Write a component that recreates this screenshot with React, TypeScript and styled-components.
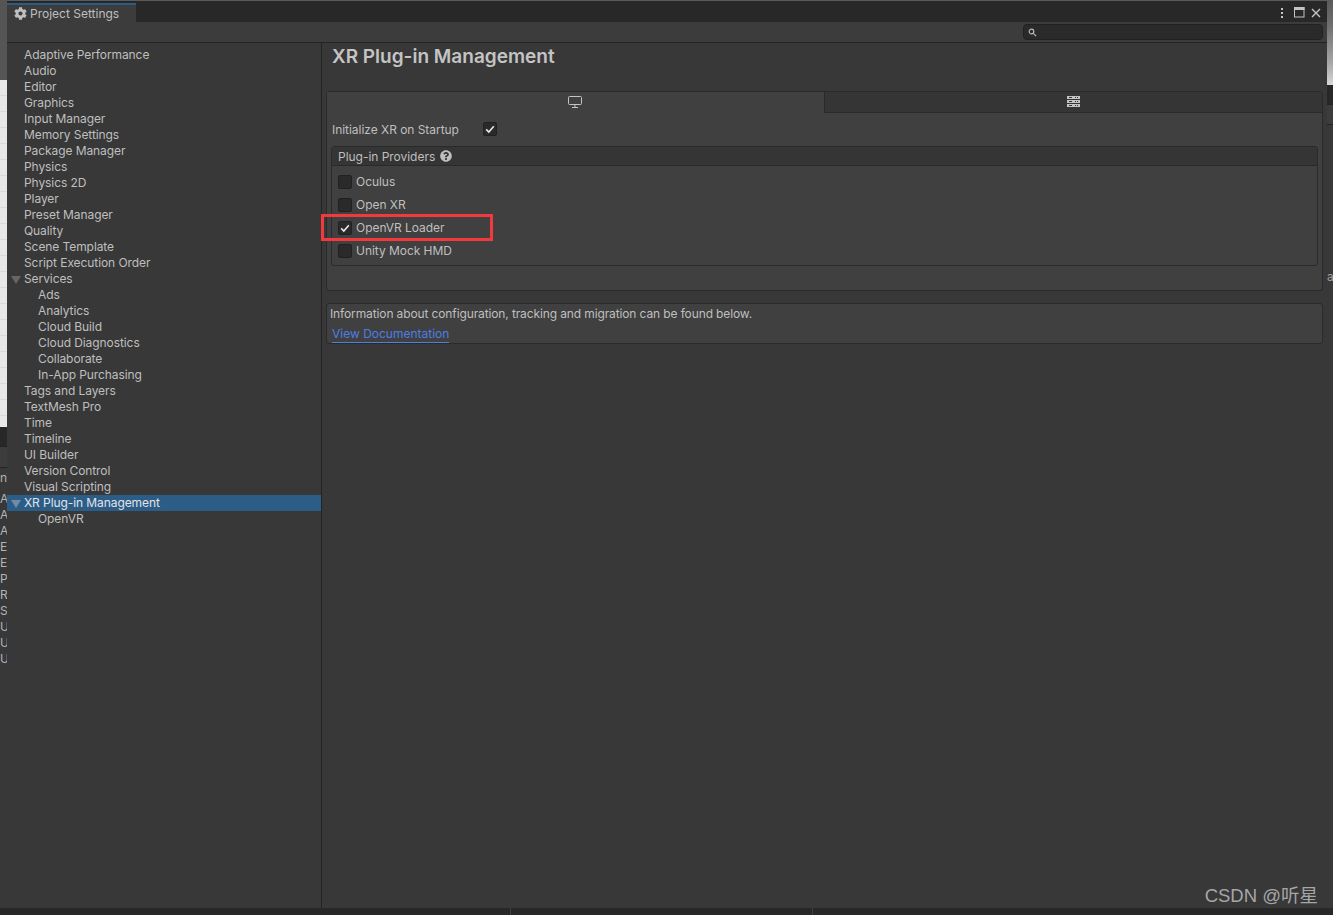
import React from "react";
import styled, { createGlobalStyle } from "styled-components";
import { FaCog, FaQuestionCircle } from "react-icons/fa";

const Global = createGlobalStyle`
  html, body { margin: 0; padding: 0; background: #282828; overflow: hidden; }
  #root { width: 1333px; height: 915px; }
`;

const Desktop = styled.div`
  width: 1333px;
  height: 915px;
  display: grid;
  grid-template-columns: 7px 1320px 6px;
  grid-template-rows: 908px 7px;
  background: #282828;
  font-family: Inter, "Liberation Sans", sans-serif;
  font-size: 12px;
  color: #bfbfbf;
  overflow: hidden;
`;

const LeftEdge = styled.div`
  display: flex;
  flex-direction: column;
  overflow: hidden;
  background: #383838;
`;

const EdgeShade = styled.div<{ $h: number }>`
  height: ${(p) => p.$h}px;
  flex: none;
  background: #555555;
`;

const EdgePicture = styled.div<{ $h: number }>`
  height: ${(p) => p.$h}px;
  flex: none;
  background: repeating-linear-gradient(180deg, #e8e8e8 0, #e8e8e8 15px, #dadada 15px, #dadada 16px);
`;

const EdgeBand = styled.div<{ $h: number; $bg: string }>`
  height: ${(p) => p.$h}px;
  flex: none;
  background: ${(p) => p.$bg};
  border-bottom: 1px solid #232323;
  box-sizing: border-box;
`;

const EdgeLetters = styled.div`
  display: flex;
  flex-direction: column;
  padding-top: 5px;
`;

const EdgeLetter = styled.div`
  height: 16px;
  line-height: 16px;
  white-space: nowrap;
  color: #b4b4b4;
`;

const EdgeClip = styled.div`
  padding-top: 2px;
`;

const RightEdge = styled.div`
  display: flex;
  flex-direction: column;
  overflow: hidden;
  background: #383838;
`;

const RightPicture = styled.div`
  height: 85px;
  flex: none;
  background: linear-gradient(180deg, #5a5a5a 0%, #6e6e6e 30%, #a8a8a8 75%, #d8d8d8 100%);
`;

const RightBand = styled.div<{ $h: number; $bg: string }>`
  height: ${(p) => p.$h}px;
  flex: none;
  background: ${(p) => p.$bg};
  border-bottom: 1px solid #232323;
  box-sizing: border-box;
`;

const RightLetter = styled.div`
  margin-top: 144px;
  height: 16px;
  line-height: 16px;
  color: #a0a0a0;
`;

const BottomEdge = styled.div`
  grid-column: 1 / 4;
  background: #282828;
  display: flex;
  padding-left: 510px;
`;

const BottomCell = styled.div<{ $w: number }>`
  width: ${(p) => p.$w}px;
  border-left: 1px solid #3e3e3e;
  box-sizing: border-box;
`;

const Window = styled.div`
  position: relative;
  display: flex;
  flex-direction: column;
  background: #383838;
  border-top: 1px solid #5a5a5a;
  box-sizing: border-box;
  overflow: hidden;
`;

const TitleBar = styled.div`
  height: 21px;
  flex: none;
  display: flex;
  align-items: stretch;
  justify-content: space-between;
  background: #282828;
`;

const Tab = styled.div`
  width: 129px;
  margin-top: 2px;
  display: flex;
  align-items: center;
  gap: 3px;
  padding-left: 7px;
  box-sizing: border-box;
  background: #3c3c3c;
  border-top: 2px solid #2c5d87;
  color: #bfbfbf;
`;

const WindowButtons = styled.div`
  display: flex;
  align-items: center;
  gap: 6px;
  padding: 2px 6px 0 0;
`;

const Toolbar = styled.div`
  height: 21px;
  flex: none;
  display: flex;
  justify-content: flex-end;
  align-items: center;
  padding-right: 4px;
  box-sizing: border-box;
  background: #3c3c3c;
  border-bottom: 1px solid #232323;
`;

const SearchField = styled.div`
  width: 300px;
  height: 16px;
  display: flex;
  align-items: center;
  padding-left: 4px;
  box-sizing: border-box;
  background: #2a2a2a;
  border: 1px solid #212121;
  border-radius: 4px;
`;

const Body = styled.div`
  flex: 1;
  display: flex;
  min-height: 0;
`;

const Sidebar = styled.nav`
  width: 315px;
  flex: none;
  box-sizing: border-box;
  padding-top: 4px;
  border-right: 1px solid #232323;
  letter-spacing: -0.08px;
`;

const TreeRow = styled.div<{ $indent?: boolean; $selected?: boolean }>`
  position: relative;
  height: 16px;
  line-height: 16px;
  padding-left: ${(p) => (p.$indent ? 31 : 17)}px;
  white-space: nowrap;
  background: ${(p) => (p.$selected ? "#2c5d87" : "transparent")};
  color: ${(p) => (p.$selected ? "#e0e4e8" : "#bfbfbf")};
`;

const Arrow = styled.span<{ $selected?: boolean }>`
  position: absolute;
  left: 4px;
  top: 5px;
  width: 0;
  height: 0;
  border-left: 5px solid transparent;
  border-right: 5px solid transparent;
  border-top: 8px solid ${(p) => (p.$selected ? "#6f8ba5" : "#666666")};
`;

const Content = styled.main`
  flex: 1;
  min-width: 0;
  padding: 0 4px;
  display: flex;
  flex-direction: column;
`;

const Heading = styled.h1`
  margin: 0 0 21px 6px;
  height: 27px;
  line-height: 27px;
  font-size: 19px;
  font-weight: 600;
  color: #c4c4c4;
`;

const TabsPanel = styled.section`
  width: 997px;
  height: 200px;
  box-sizing: border-box;
  border: 1px solid #2a2a2a;
  border-radius: 3px;
  background: #404040;
`;

const PlatformTabs = styled.div`
  display: grid;
  grid-template-columns: 497px 1fr;
  height: 21px;
`;

const PlatformTab = styled.div<{ $active?: boolean }>`
  display: flex;
  align-items: center;
  justify-content: center;
  box-sizing: border-box;
  padding: 0 ${(p) => (p.$active ? 2 : 0)}px 1px 0;
  background: ${(p) => (p.$active ? "#404040" : "#353535")};
  border-left: ${(p) => (p.$active ? "0" : "1px solid #2a2a2a")};
  border-bottom: ${(p) => (p.$active ? "0" : "1px solid #2a2a2a")};
`;

const InitRow = styled.div`
  height: 33px;
  box-sizing: border-box;
  display: grid;
  grid-template-columns: 151px 14px;
  align-items: center;
  padding: 0 0 1px 5px;
  letter-spacing: -0.04px;
`;

const Checkbox = styled.span`
  width: 14px;
  height: 14px;
  box-sizing: border-box;
  display: flex;
  align-items: center;
  justify-content: center;
  background: #2a2a2a;
  border: 1px solid #212121;
  border-radius: 2px;
  flex: none;
`;

const Group = styled.div`
  margin: 0 4px;
  height: 120px;
  box-sizing: border-box;
  border: 1px solid #2a2a2a;
  border-radius: 3px;
  display: flex;
  flex-direction: column;
`;

const GroupHeader = styled.div`
  height: 19px;
  flex: none;
  display: flex;
  align-items: center;
  gap: 5px;
  padding-left: 6px;
  box-sizing: border-box;
  background: #353535;
  border-bottom: 1px solid #2a2a2a;
  letter-spacing: -0.03px;
`;

const Providers = styled.div`
  display: flex;
  flex-direction: column;
  gap: 5px;
  padding: 7px 0 0 6px;
  letter-spacing: -0.04px;
`;

const Provider = styled.div`
  position: relative;
  height: 18px;
  display: flex;
  align-items: center;
  gap: 4px;
`;

const ProviderName = styled.span`
  margin-bottom: 2px;
`;

const Highlight = styled.span`
  position: absolute;
  left: -17px;
  top: -5px;
  width: 172px;
  height: 27px;
  box-sizing: border-box;
  border: 3px solid #f23a3e;
  pointer-events: none;
`;

const InfoBox = styled.section`
  width: 997px;
  height: 41px;
  margin-top: 12px;
  box-sizing: border-box;
  border: 1px solid #2a2a2a;
  border-radius: 3px;
  background: #404040;
  padding: 1px 0 0 3px;
  display: flex;
  flex-direction: column;
`;

const InfoText = styled.div`
  height: 22px;
  line-height: 18px;
  white-space: nowrap;
  letter-spacing: -0.12px;
`;

const DocLink = styled.a`
  margin-left: 2px;
  line-height: 17px;
  width: max-content;
  color: #4c7ee6;
  border-bottom: 1px solid #4c7ee6;
`;

const Watermark = styled.div`
  position: absolute;
  right: 9px;
  bottom: 0;
  font-family: "Liberation Sans", "Noto Sans CJK SC", sans-serif;
  font-size: 18.5px;
  line-height: 24px;
  color: #a6a6a6;
`;

const Check = () => (
  <svg width="10" height="10" viewBox="0 0 10 10" aria-hidden="true">
    <path d="M1.2 5.4 L3.8 8 L8.8 2.2" fill="none" stroke="#e8e8e8" strokeWidth="1.6" />
  </svg>
);

const settings: { label: string; indent?: boolean; arrow?: boolean; selected?: boolean }[] = [
  { label: "Adaptive Performance" },
  { label: "Audio" },
  { label: "Editor" },
  { label: "Graphics" },
  { label: "Input Manager" },
  { label: "Memory Settings" },
  { label: "Package Manager" },
  { label: "Physics" },
  { label: "Physics 2D" },
  { label: "Player" },
  { label: "Preset Manager" },
  { label: "Quality" },
  { label: "Scene Template" },
  { label: "Script Execution Order" },
  { label: "Services", arrow: true },
  { label: "Ads", indent: true },
  { label: "Analytics", indent: true },
  { label: "Cloud Build", indent: true },
  { label: "Cloud Diagnostics", indent: true },
  { label: "Collaborate", indent: true },
  { label: "In-App Purchasing", indent: true },
  { label: "Tags and Layers" },
  { label: "TextMesh Pro" },
  { label: "Time" },
  { label: "Timeline" },
  { label: "UI Builder" },
  { label: "Version Control" },
  { label: "Visual Scripting" },
  { label: "XR Plug-in Management", arrow: true, selected: true },
  { label: "OpenVR", indent: true },
];

const providers = [
  { name: "Oculus", on: false },
  { name: "Open XR", on: false },
  { name: "OpenVR Loader", on: true },
  { name: "Unity Mock HMD", on: false },
];

export default function App() {
  return (
    <Desktop>
      <Global />
      <LeftEdge>
        <EdgeShade $h={80} />
        <EdgePicture $h={347} />
        <EdgeBand $h={20} $bg="#282828" />
        <EdgeBand $h={21} $bg="#3c3c3c" />
        <EdgeClip>
          <EdgeLetter>n\</EdgeLetter>
        </EdgeClip>
        <EdgeLetters>
          {"AAAEEPRSUUU".split("").map((c, i) => (
            <EdgeLetter key={i}>{c}</EdgeLetter>
          ))}
        </EdgeLetters>
      </LeftEdge>
      <Window>
        <TitleBar>
          <Tab>
            <FaCog size={13} />
            <span>Project Settings</span>
          </Tab>
          <WindowButtons>
            <svg width="4" height="12" viewBox="0 0 4 12" aria-hidden="true">
              <g fill="#c4c4c4">
                <rect x="1" y="1" width="2" height="2" />
                <rect x="1" y="5" width="2" height="2" />
                <rect x="1" y="9" width="2" height="2" />
              </g>
            </svg>
            <svg width="11" height="11" viewBox="0 0 11 11" aria-hidden="true" style={{ marginLeft: 4 }}>
              <rect x="0.5" y="0.5" width="9.5" height="9.5" fill="none" stroke="#c4c4c4" />
              <rect x="0" y="0" width="10.5" height="3" fill="#c4c4c4" />
            </svg>
            <svg width="10" height="10" viewBox="0 0 10 10" aria-hidden="true">
              <path d="M1 1 L9 9 M9 1 L1 9" stroke="#c4c4c4" strokeWidth="1.4" />
            </svg>
          </WindowButtons>
        </TitleBar>
        <Toolbar>
          <SearchField>
            <svg width="9" height="9" viewBox="0 0 9 9" aria-hidden="true">
              <circle cx="3.5" cy="3.5" r="2.3" fill="none" stroke="#b8b8b8" strokeWidth="1.2" />
              <path d="M5.3 5.3 L8.2 8.2" stroke="#b8b8b8" strokeWidth="1.2" />
            </svg>
          </SearchField>
        </Toolbar>
        <Body>
          <Sidebar>
            {settings.map((s) => (
              <TreeRow key={s.label} $indent={s.indent} $selected={s.selected}>
                {s.arrow && <Arrow $selected={s.selected} />}
                {s.label}
              </TreeRow>
            ))}
          </Sidebar>
          <Content>
            <Heading>XR Plug-in Management</Heading>
            <TabsPanel>
              <PlatformTabs>
                <PlatformTab $active>
                  <svg width="14" height="12" viewBox="0 0 14 12" aria-hidden="true">
                    <rect x="0.5" y="0.5" width="13" height="8" rx="1" fill="none" stroke="#c4c4c4" />
                    <path d="M7 9 V11 M4 11.5 H10" stroke="#c4c4c4" />
                  </svg>
                </PlatformTab>
                <PlatformTab>
                  <svg width="13" height="12" viewBox="0 0 13 12" aria-hidden="true">
                    <g fill="#c4c4c4">
                      <rect x="0" y="0" width="13" height="3" />
                      <rect x="0" y="4" width="13" height="3" />
                      <rect x="0" y="8" width="13" height="3" />
                    </g>
                    <g fill="#353535">
                      <rect x="2" y="1" width="3" height="1" />
                      <rect x="8" y="1" width="1" height="1" />
                      <rect x="10" y="1" width="1" height="1" />
                      <rect x="2" y="5" width="3" height="1" />
                      <rect x="8" y="5" width="1" height="1" />
                      <rect x="10" y="5" width="1" height="1" />
                      <rect x="2" y="9" width="3" height="1" />
                      <rect x="8" y="9" width="1" height="1" />
                      <rect x="10" y="9" width="1" height="1" />
                    </g>
                  </svg>
                </PlatformTab>
              </PlatformTabs>
              <InitRow>
                <span>Initialize XR on Startup</span>
                <Checkbox>
                  <Check />
                </Checkbox>
              </InitRow>
              <Group>
                <GroupHeader>
                  <span>Plug-in Providers</span>
                  <FaQuestionCircle size={12} />
                </GroupHeader>
                <Providers>
                  {providers.map((p) => (
                    <Provider key={p.name}>
                      <Checkbox>{p.on && <Check />}</Checkbox>
                      <ProviderName>{p.name}</ProviderName>
                      {p.on && <Highlight />}
                    </Provider>
                  ))}
                </Providers>
              </Group>
            </TabsPanel>
            <InfoBox>
              <InfoText>Information about configuration, tracking and migration can be found below.</InfoText>
              <DocLink>View Documentation</DocLink>
            </InfoBox>
          </Content>
        </Body>
        <Watermark>CSDN @听星</Watermark>
      </Window>
      <RightEdge>
        <RightPicture />
        <RightBand $h={20} $bg="#282828" />
        <RightBand $h={20} $bg="#3c3c3c" />
        <RightLetter>a</RightLetter>
      </RightEdge>
      <BottomEdge>
        <BottomCell $w={302} />
        <BottomCell $w={300} />
      </BottomEdge>
    </Desktop>
  );
}
